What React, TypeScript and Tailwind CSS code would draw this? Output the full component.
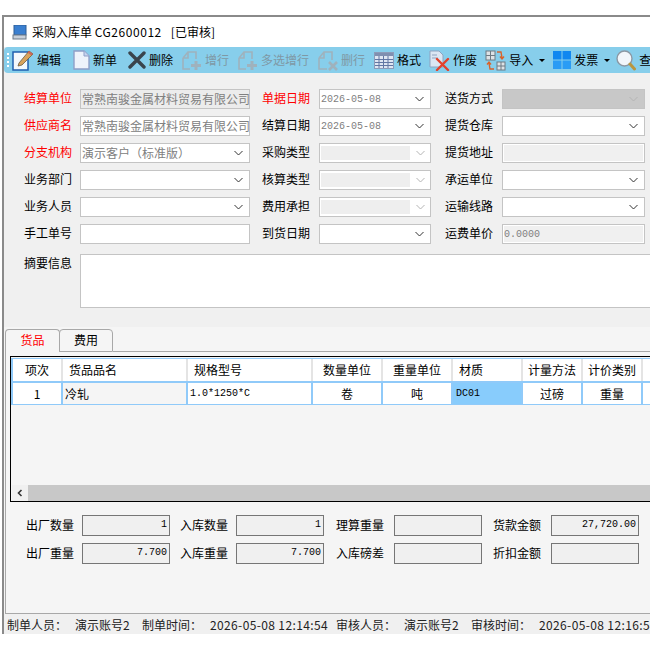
import React from "react";

const cjk = "font-['Noto_Sans_CJK_SC','Noto_Sans',sans-serif]";
const mono = "font-['Liberation_Mono','Noto_Sans_CJK_SC',monospace]";

const Chevron = ({ light = false }: { light?: boolean }) => (
    <svg width="9" height="6" viewBox="0 0 9 6" className="shrink-0">
        <path d="M0.5 1 L4.5 5 L8.5 1" fill="none" stroke={light ? "#b4b4b4" : "#333333"} strokeWidth="1" />
    </svg>
);

const EditIcon = () => (
    <svg width="22" height="22" viewBox="0 0 22 22">
        <rect x="1" y="3" width="15" height="18" fill="#f4f8fc" stroke="#1f5fae" strokeWidth="1.5" />
        <path d="M7 14 L17 2 L21 5 L10 16 L6 17 Z" fill="#d9a35a" stroke="#6b5a40" strokeWidth="0.8" />
        <path d="M17 2 L21 5 L19.5 6.5 L15.5 3.5 Z" fill="#c9665a" />
    </svg>
);

const NewIcon = () => (
    <svg width="17" height="20" viewBox="0 0 17 20">
        <path d="M1 1 H11 L16 6 V19 H1 Z" fill="#eef3fb" stroke="#8f9fc8" strokeWidth="1.4" />
        <path d="M11 1 V6 H16" fill="#c8d4ee" stroke="#8f9fc8" strokeWidth="1" />
    </svg>
);

const DeleteIcon = () => (
    <svg width="18" height="18" viewBox="0 0 18 18">
        <path d="M2 2 L16 16 M16 2 L2 16" stroke="#3a444c" strokeWidth="3.4" strokeLinecap="round" />
    </svg>
);

const AddRowIcon = () => (
    <svg width="21" height="21" viewBox="0 0 21 21" fill="none" stroke="#9fb2bd">
        <path d="M2 8 L7 2 H15 V9 M2 8 V19 H9 M2 8 H7 V2" strokeWidth="1.6" />
        <path d="M15 11 V20 M10 15.5 H20" strokeWidth="3" />
    </svg>
);

const DelRowIcon = () => (
    <svg width="21" height="21" viewBox="0 0 21 21" fill="none" stroke="#9fb2bd">
        <path d="M2 8 L7 2 H15 V10 M2 8 V19 H10 M2 8 H7 V2" strokeWidth="1.6" />
        <path d="M12 12 L20 20 M20 12 L12 20" strokeWidth="2.6" />
    </svg>
);

const GridIcon = () => (
    <svg width="20" height="17" viewBox="0 0 20 17">
        <rect x="0.5" y="0.5" width="19" height="16" fill="#dfe6f2" stroke="#8c9bb8" />
        <rect x="1" y="1" width="18" height="3" fill="#7f8fb0" />
        <path d="M5 4 V16 M9.5 4 V16 M14 4 V16 M1 7.5 H19 M1 10.5 H19 M1 13.5 H19" stroke="#6277a4" />
    </svg>
);

const VoidIcon = () => (
    <svg width="21" height="21" viewBox="0 0 21 21">
        <path d="M1 1 H10 L14 5 V17 H1 Z" fill="#dbe6f3" stroke="#8fa3c0" />
        <path d="M3 5 H8 M3 8 H9" stroke="#8fa3c0" />
        <path d="M8 9 L19 20 M19 9 L8 20" stroke="#e2412c" strokeWidth="2.4" strokeLinecap="round" />
    </svg>
);

const ImportIcon = () => (
    <svg width="21" height="21" viewBox="0 0 21 21">
        <rect x="1" y="1" width="9" height="9" fill="#dde2e6" stroke="#6f7a84" />
        <path d="M5.5 1 V10 M1 5.5 H10" stroke="#6f7a84" />
        <rect x="12" y="12" width="8" height="8" fill="#dde2e6" stroke="#6f7a84" />
        <path d="M16 12 V20 M12 16 H20" stroke="#6f7a84" />
        <path d="M12 2 H16 L17 8 M15 6.5 L17 9 L19 6.5" fill="none" stroke="#d9622b" strokeWidth="1.4" />
        <path d="M9 19 H5 L4 13 M2 14.5 L4 12 L6 14.5" fill="none" stroke="#d9622b" strokeWidth="1.4" />
    </svg>
);

const WinIcon = () => (
    <svg width="18" height="18" viewBox="0 0 18 18">
        <rect x="0" y="0" width="8.5" height="8.5" fill="#0f87f0" />
        <rect x="9.5" y="0" width="8.5" height="8.5" fill="#0f87f0" />
        <rect x="0" y="9.5" width="8.5" height="8.5" fill="#2a9cf5" />
        <rect x="9.5" y="9.5" width="8.5" height="8.5" fill="#2a9cf5" />
    </svg>
);

const SearchIcon = () => (
    <svg width="20" height="21" viewBox="0 0 20 21">
        <circle cx="8.5" cy="8.5" r="7.5" fill="#f1f6fb" stroke="#8b98a4" strokeWidth="1.4" />
        <path d="M14 14 L18.5 19" stroke="#b9963f" strokeWidth="3" strokeLinecap="round" />
    </svg>
);

const Tool = ({ icon, label, off = false, ml, menu = false }: { icon: React.ReactNode; label: string; off?: boolean; ml: string; menu?: boolean }) => (
    <div className={`flex items-center shrink-0 ${ml}`}>
        {icon}
        <span className={`ml-[3px] text-[12px] whitespace-nowrap ${off ? "text-[#7f98a5]" : "text-black"}`}>{label}</span>
        {menu && <span className="ml-[6px] w-0 h-0 border-x-[3px] border-x-transparent border-t-[3px] border-t-black" />}
    </div>
);

const Label = ({ text, red = false, w }: { text: string; red?: boolean; w: string }) => (
    <span className={`text-[12px] leading-[18px] pb-[2px] shrink-0 whitespace-nowrap ${w} ${red ? "text-[#ff0000]" : "text-black"}`}>{text}</span>
);

type BoxKind = "select" | "text" | "gray" | "disabled" | "filled" | "readonly";

const Box = ({ w, kind, value, dateFont = false }: { w: string; kind: BoxKind; value?: string; dateFont?: boolean }) => {
    const bg = kind === "gray" ? "bg-[#ececec]" : kind === "filled" ? "bg-[#c8c8c8]" : kind === "readonly" ? "bg-[#f0f0f0] shadow-[inset_0_0_0_1px_#ffffff]" : "bg-white";
    return (
        <div className={`flex items-center shrink-0 border border-[#c4c4c4] h-[20px] ${w} ${bg} overflow-hidden`}>
            {kind === "disabled" ? (
                <div className="ml-[1px] flex flex-1 items-center h-full py-[2px]">
                    <div className="h-full flex-1 bg-[#eeeeee]" />
                    <div className="w-[20px] flex justify-center"><Chevron light /></div>
                </div>
            ) : (
                <>
                    <span className={`pl-[1px] flex-1 min-w-0 overflow-hidden whitespace-nowrap text-[#808080] ${dateFont ? `${mono} text-[10px]` : "text-[12px]"}`}>{value}</span>
                    {(kind === "select" || kind === "filled") && (
                        <div className="w-[22px] flex justify-center"><Chevron light={kind === "filled"} /></div>
                    )}
                </>
            )}
        </div>
    );
};

const company = "常熟南骏金属材料贸易有限公司";

const columns = [
    { head: "项次", w: "w-[50px]", cell: "1", align: "text-center text-[12px]", headAlign: "justify-center" },
    { head: "货品品名", w: "w-[125px]", cell: "冷轧", align: "pl-[2px] bg-[#f5f5f5] text-[12px]", headAlign: "pl-[6px]" },
    { head: "规格型号", w: "w-[125px]", cell: "1.0*1250*C", align: `pl-[2px] ${mono} text-[10px]`, headAlign: "pl-[6px]" },
    { head: "数量单位", w: "w-[70px]", cell: "卷", align: "text-center text-[12px]", headAlign: "justify-center" },
    { head: "重量单位", w: "w-[70px]", cell: "吨", align: "text-center text-[12px]", headAlign: "justify-center" },
    { head: "材质", w: "w-[70px]", cell: "DC01", align: `pl-[3px] bg-[#88ccfc] ${mono} text-[10px]`, headAlign: "pl-[6px]" },
    { head: "计量方法", w: "w-[60px]", cell: "过磅", align: "text-center text-[12px]", headAlign: "justify-center" },
    { head: "计价类别", w: "w-[60px]", cell: "重量", align: "text-center text-[12px]", headAlign: "justify-center" },
    { head: "", w: "w-[40px]", cell: "", align: "", headAlign: "" },
];

const Summary = ({ items }: { items: { label: string; value?: string; w: string }[] }) => (
    <div className="flex items-center h-[21px]">
        {items.map((it) => (
            <React.Fragment key={it.label}>
                <span className={`text-[12px] leading-[18px] pb-[2px] shrink-0 ${it.w}`}>{it.label}</span>
                <div className={`w-[88px] h-[21px] shrink-0 border border-[#767676] bg-[#f0f0f0] text-right pr-[2px] ${mono} text-[10px] leading-[18px] text-black`}>{it.value}</div>
            </React.Fragment>
        ))}
    </div>
);

export default function App() {
    return (
        <div className={`w-[650px] h-[650px] bg-white overflow-hidden pt-[15px] pl-[2px] ${cjk}`}>
            <div className="w-[700px] h-[619px] border-l-2 border-t-2 border-[#8a8a8a] flex flex-col bg-[#f0f0f0]">
                <div className="h-[30px] bg-white flex items-center pl-[8px] shrink-0">
                    <svg width="15" height="15" viewBox="0 0 15 15">
                        <rect x="2" y="0" width="12" height="10" fill="#3a7fd0" stroke="#2f5f96" />
                        <rect x="1" y="10" width="13" height="4" fill="#c8d0da" stroke="#6c7a8a" />
                    </svg>
                    <span className="ml-[5px] text-[12px] text-black whitespace-pre">
                        采购入库单 <span className="tracking-[0.55px]">CG2600012</span>
                        <span className="ml-[9px]">[已审核]</span>
                    </span>
                </div>

                <div className="h-[26px] bg-[#87ceeb] rounded-l-[4px] flex items-center shrink-0 pl-[3px]">
                    <div className="flex flex-col gap-[2px] shrink-0">
                        <span className="w-[2px] h-[2px] bg-white" />
                        <span className="w-[2px] h-[2px] bg-white" />
                        <span className="w-[2px] h-[2px] bg-white" />
                        <span className="w-[2px] h-[2px] bg-white" />
                    </div>
                    <Tool icon={<EditIcon />} label="编辑" ml="ml-[3px]" />
                    <Tool icon={<NewIcon />} label="新单" ml="ml-[12px]" />
                    <Tool icon={<DeleteIcon />} label="删除" ml="ml-[11px]" />
                    <Tool icon={<AddRowIcon />} label="增行" off ml="ml-[8px]" />
                    <Tool icon={<AddRowIcon />} label="多选增行" off ml="ml-[8px]" />
                    <Tool icon={<DelRowIcon />} label="删行" off ml="ml-[8px]" />
                    <Tool icon={<GridIcon />} label="格式" ml="ml-[9px]" />
                    <Tool icon={<VoidIcon />} label="作废" ml="ml-[8px]" />
                    <Tool icon={<ImportIcon />} label="导入" menu ml="ml-[8px]" />
                    <Tool icon={<WinIcon />} label="发票" menu ml="ml-[8px]" />
                    <Tool icon={<SearchIcon />} label="查询" ml="ml-[6px]" />
                </div>

                <div className="h-[254px] shrink-0 pt-[16px] pl-[20px] flex flex-col gap-[7px]">
                    <div className="flex items-center">
                        <Label text="结算单位" red w="w-[56px]" />
                        <Box w="w-[170px]" kind="gray" value={company} />
                        <Label text="单据日期" red w="w-[57px] ml-[12px]" />
                        <Box w="w-[112px]" kind="select" value="2026-05-08" dateFont />
                        <Label text="送货方式" w="w-[57px] ml-[14px]" />
                        <Box w="w-[143px]" kind="filled" />
                    </div>
                    <div className="flex items-center">
                        <Label text="供应商名" red w="w-[56px]" />
                        <Box w="w-[170px]" kind="text" value={company} />
                        <Label text="结算日期" w="w-[57px] ml-[12px]" />
                        <Box w="w-[112px]" kind="select" value="2026-05-08" dateFont />
                        <Label text="提货仓库" w="w-[57px] ml-[14px]" />
                        <Box w="w-[143px]" kind="select" />
                    </div>
                    <div className="flex items-center">
                        <Label text="分支机构" red w="w-[56px]" />
                        <Box w="w-[170px]" kind="select" value="演示客户（标准版）" />
                        <Label text="采购类型" w="w-[57px] ml-[12px]" />
                        <Box w="w-[112px]" kind="disabled" />
                        <Label text="提货地址" w="w-[57px] ml-[14px]" />
                        <Box w="w-[143px]" kind="readonly" />
                    </div>
                    <div className="flex items-center">
                        <Label text="业务部门" w="w-[56px]" />
                        <Box w="w-[170px]" kind="select" />
                        <Label text="核算类型" w="w-[57px] ml-[12px]" />
                        <Box w="w-[112px]" kind="disabled" />
                        <Label text="承运单位" w="w-[57px] ml-[14px]" />
                        <Box w="w-[143px]" kind="select" />
                    </div>
                    <div className="flex items-center">
                        <Label text="业务人员" w="w-[56px]" />
                        <Box w="w-[170px]" kind="select" />
                        <Label text="费用承担" w="w-[57px] ml-[12px]" />
                        <Box w="w-[112px]" kind="disabled" />
                        <Label text="运输线路" w="w-[57px] ml-[14px]" />
                        <Box w="w-[143px]" kind="select" />
                    </div>
                    <div className="flex items-center">
                        <Label text="手工单号" w="w-[56px]" />
                        <Box w="w-[170px]" kind="text" />
                        <Label text="到货日期" w="w-[57px] ml-[12px]" />
                        <Box w="w-[112px]" kind="select" />
                        <Label text="运费单价" w="w-[57px] ml-[14px]" />
                        <Box w="w-[143px]" kind="readonly" value="0.0000" dateFont />
                    </div>
                    <div className="flex items-start mt-[3px]">
                        <Label text="摘要信息" w="w-[56px]" />
                        <div className="w-[600px] h-[54px] shrink-0 bg-white border border-[#c4c4c4]" />
                    </div>
                </div>

                <div className="flex-1 bg-[#f5f5f5] flex flex-col pt-[2px] min-h-0">
                    <div className="flex h-[23px] pl-[1px] items-end shrink-0">
                        <div className="w-[55px] h-[23px] bg-[#f5f5f5] border border-b-0 border-[#a8a8a8] rounded-t-[4px] text-[#ff0000] text-[12px] pb-[2px] flex items-center justify-center">货品</div>
                        <div className="w-[54px] h-[23px] -ml-px bg-[#f5f5f5] border border-[#a8a8a8] rounded-t-[4px] text-black text-[12px] pb-[2px] flex items-center justify-center">费用</div>
                        <div className="flex-1 border-b border-[#a8a8a8]" />
                    </div>
                    <div className="flex-1 ml-[1px] border-l border-b border-[#a8a8a8] flex flex-col min-h-0">
                        <div className="ml-[4px] mt-[4px] h-[146px] shrink-0 border-y border-l border-black flex flex-col overflow-hidden">
                            <div className="flex h-[25px] shrink-0 mt-[1px] bg-white border-t border-[#90caf9] border-b-2 border-b-[#90caf9] border-l-2 border-l-[#90caf9]">
                                {columns.map((c) => (
                                    <div key={c.w + c.head} className={`${c.w} shrink-0 flex items-center text-[12px] border-r-2 border-[#e4e4e4] ${c.headAlign}`}>{c.head}</div>
                                ))}
                            </div>
                            <div className="flex h-[22px] shrink-0 bg-white border-b border-[#90caf9] border-l-2 border-l-[#90caf9]">
                                {columns.map((c) => (
                                    <div key={c.w + c.cell} className={`${c.w} shrink-0 leading-[21px] border-r-2 border-[#90caf9] ${c.align}`}>{c.cell}</div>
                                ))}
                            </div>
                            <div className="flex-1 bg-[#f5f5f5]" />
                            <div className="h-[16px] shrink-0 bg-[#c8c8c8] flex ml-[1px]">
                                <div className="w-[16px] bg-[#f0f0f0] flex items-center justify-center">
                                    <svg width="6" height="8" viewBox="0 0 6 8">
                                        <path d="M4.5 1 L1.5 4 L4.5 7" fill="none" stroke="#333333" strokeWidth="1.6" />
                                    </svg>
                                </div>
                            </div>
                        </div>
                        <div className="flex flex-col gap-[7px] mt-[13px] pl-[20px]">
                            <Summary items={[
                                { label: "出厂数量", value: "1", w: "w-[56px]" },
                                { label: "入库数量", value: "1", w: "w-[56px] ml-[10px]" },
                                { label: "理算重量", w: "w-[58px] ml-[12px]" },
                                { label: "货款金额", value: "27,720.00", w: "w-[58px] ml-[11px]" },
                            ]} />
                            <Summary items={[
                                { label: "出厂重量", value: "7.700", w: "w-[56px]" },
                                { label: "入库重量", value: "7.700", w: "w-[56px] ml-[10px]" },
                                { label: "入库磅差", w: "w-[58px] ml-[12px]" },
                                { label: "折扣金额", w: "w-[58px] ml-[11px]" },
                            ]} />
                        </div>
                    </div>
                </div>

                <div className="h-[20px] shrink-0 bg-[#f0f0f0] flex items-center pl-[3px] pt-[1px] text-[12px] text-[#222222] whitespace-nowrap">
                    <span className="w-[68px] shrink-0">制单人员：</span>
                    <span className="w-[67px] shrink-0">演示账号2</span>
                    <span className="w-[68px] shrink-0">制单时间：</span>
                    <span className="w-[126px] shrink-0 tracking-[0.37px]">2026-05-08 12:14:54</span>
                    <span className="w-[68px] shrink-0">审核人员：</span>
                    <span className="w-[67px] shrink-0">演示账号2</span>
                    <span className="w-[68px] shrink-0">审核时间：</span>
                    <span className="shrink-0 tracking-[0.37px]">2026-05-08 12:16:54</span>
                </div>
            </div>
        </div>
    );
}
